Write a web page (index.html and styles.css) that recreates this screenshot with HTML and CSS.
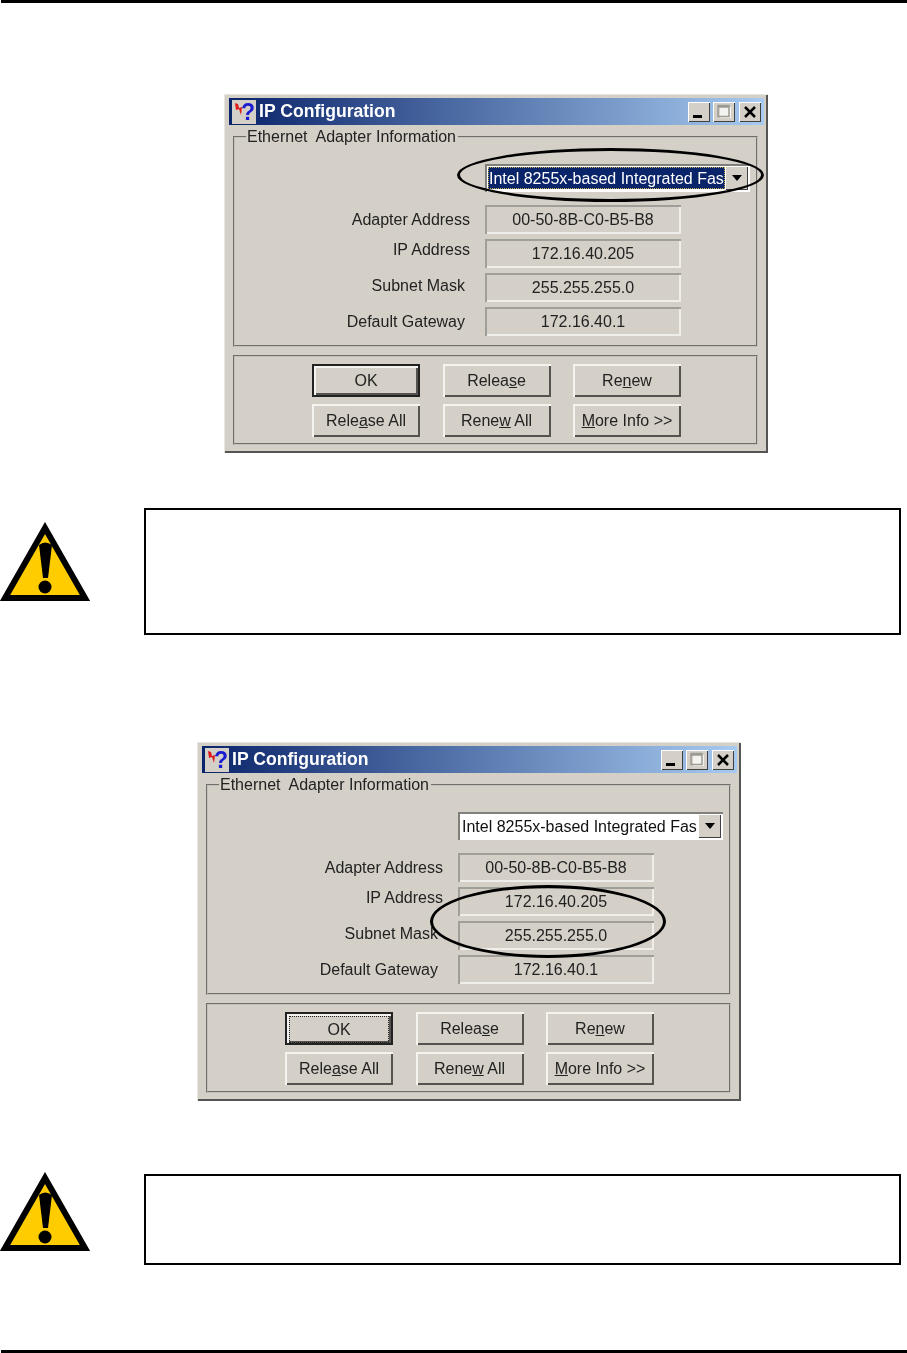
FILE: index.html
```html
<!DOCTYPE html>
<html lang="en">
<head>
  <meta charset="UTF-8">
  <title>IP Configuration</title>
  <link rel="stylesheet" href="styles.css">
</head>
<body>
  <div class="rule"></div>

  <div class="window window-first">
    <div class="titlebar">
      <div class="app-icon">
        <svg viewBox="0 0 24 24"><path d="M3 3l1 7 3-1 2 6 1-8-3 1-1-4z" fill="#e01818"/></svg>
        <span class="app-icon-mark">?</span>
      </div>
      <span class="title-text">IP Configuration</span>
      <div class="controls">
        <div class="ctl"><svg viewBox="0 0 22 20"><path d="M5 13h9v3H5z" fill="#000"/></svg></div>
        <div class="ctl"><svg viewBox="0 0 22 20"><path d="M7 5h11v11H7z" fill="#f4f3ef"/><path d="M5 3.500h11v11H5zM5 5h11" fill="none" stroke="#9c9a94" stroke-width="1.500"/></svg></div>
        <div class="ctl ctl-close"><svg viewBox="0 0 22 20"><path d="M6 5l10 10M16 5L6 15" fill="none" stroke="#000" stroke-width="2.500"/></svg></div>
      </div>
    </div>
    <fieldset class="group">
      <legend>Ethernet&nbsp; Adapter Information</legend>
      <div class="combo">
        <div class="combo-value combo-selected">Intel 8255x-based Integrated Fas</div>
        <div class="combo-arrow"><svg viewBox="0 0 12 7"><path d="M1 0h10L6 6z" fill="#000"/></svg></div>
      </div>
      <div class="fields">
        <div class="lbl">Adapter Address</div><div class="field">00-50-8B-C0-B5-B8</div>
        <div class="lbl lbl-ip">IP Address</div><div class="field">172.16.40.205</div>
        <div class="lbl lbl-mask">Subnet Mask</div><div class="field">255.255.255.0</div>
        <div class="lbl lbl-gw">Default Gateway</div><div class="field">172.16.40.1</div>
      </div>
    </fieldset>
    <div class="panel">
      <div class="buttons">
        <button class="btn btn-default">OK</button>
        <button class="btn">Relea<u>s</u>e</button>
        <button class="btn">Re<u>n</u>ew</button>
        <button class="btn">Rele<u>a</u>se All</button>
        <button class="btn">Rene<u>w</u> All</button>
        <button class="btn"><u>M</u>ore Info &gt;&gt;</button>
      </div>
    </div>
    <div class="ring ring-combo"></div>
  </div>

  <div class="note note-first">
    <svg class="warn" viewBox="0 0 90 80">
      <path d="M45 6L5 76h80z" fill="#ffcc00" stroke="#000" stroke-width="6"/>
      <path d="M39 23q6-5 13 0l-4 33h-5z" fill="#000"/>
      <circle cx="45" cy="65" r="6.500" fill="#000"/>
    </svg>
    <div class="note-box note-box-tall"></div>
  </div>

  <div class="window window-second">
    <div class="titlebar">
      <div class="app-icon">
        <svg viewBox="0 0 24 24"><path d="M3 3l1 7 3-1 2 6 1-8-3 1-1-4z" fill="#e01818"/></svg>
        <span class="app-icon-mark">?</span>
      </div>
      <span class="title-text">IP Configuration</span>
      <div class="controls">
        <div class="ctl"><svg viewBox="0 0 22 20"><path d="M5 13h9v3H5z" fill="#000"/></svg></div>
        <div class="ctl"><svg viewBox="0 0 22 20"><path d="M7 5h11v11H7z" fill="#f4f3ef"/><path d="M5 3.500h11v11H5zM5 5h11" fill="none" stroke="#9c9a94" stroke-width="1.500"/></svg></div>
        <div class="ctl ctl-close"><svg viewBox="0 0 22 20"><path d="M6 5l10 10M16 5L6 15" fill="none" stroke="#000" stroke-width="2.500"/></svg></div>
      </div>
    </div>
    <fieldset class="group">
      <legend>Ethernet&nbsp; Adapter Information</legend>
      <div class="combo">
        <div class="combo-value">Intel 8255x-based Integrated Fas</div>
        <div class="combo-arrow"><svg viewBox="0 0 12 7"><path d="M1 0h10L6 6z" fill="#000"/></svg></div>
      </div>
      <div class="fields">
        <div class="lbl">Adapter Address</div><div class="field">00-50-8B-C0-B5-B8</div>
        <div class="lbl lbl-ip">IP Address</div><div class="field">172.16.40.205</div>
        <div class="lbl lbl-mask">Subnet Mask</div><div class="field">255.255.255.0</div>
        <div class="lbl lbl-gw">Default Gateway</div><div class="field">172.16.40.1</div>
      </div>
    </fieldset>
    <div class="panel">
      <div class="buttons">
        <button class="btn btn-default"><span class="focus-box">OK</span></button>
        <button class="btn">Relea<u>s</u>e</button>
        <button class="btn">Re<u>n</u>ew</button>
        <button class="btn">Rele<u>a</u>se All</button>
        <button class="btn">Rene<u>w</u> All</button>
        <button class="btn"><u>M</u>ore Info &gt;&gt;</button>
      </div>
    </div>
    <div class="ring ring-fields"></div>
  </div>

  <div class="note note-second">
    <svg class="warn" viewBox="0 0 90 80">
      <path d="M45 6L5 76h80z" fill="#ffcc00" stroke="#000" stroke-width="6"/>
      <path d="M39 23q6-5 13 0l-4 33h-5z" fill="#000"/>
      <circle cx="45" cy="65" r="6.500" fill="#000"/>
    </svg>
    <div class="note-box note-box-short"></div>
  </div>

  <div class="rule rule-bottom"></div>
</body>
</html>
```

FILE: styles.css
```css
body {
  margin: 0;
  width: 907px;
  height: 1353px;
  display: flex;
  flex-direction: column;
  background-color: #fff;
  font-family: "Liberation Sans", Arial, sans-serif;
  overflow: hidden;
}

.rule {
  height: 3px;
  margin-left: 1px;
  background-color: #000;
  flex: none;
}

.rule-bottom {
  margin-top: auto;
}

/* dialog */
.window {
  position: relative;
  box-sizing: border-box;
  width: 544px;
  height: 359px;
  flex: none;
  padding: 3px 4px;
  background-color: #d4d0c8;
  border-top: 1px solid #e8e6e1;
  border-left: 1px solid #e8e6e1;
  box-shadow: inset -2px -2px 0 #555;
  font-size: 16px;
  color: #222;
  filter: blur(0.35px);
}

.window-first {
  margin: 91px 0 0 224px;
}

.window-second {
  margin: 107px 0 0 197px;
}

.titlebar {
  display: flex;
  align-items: center;
  height: 27px;
  padding: 0 3px;
  background: linear-gradient(to right, #0a246a, #a6caf0);
}

.app-icon {
  position: relative;
  width: 24px;
  height: 24px;
  flex: none;
  background-color: #d4d0c8;
}

.app-icon svg {
  display: block;
  width: 24px;
  height: 24px;
}

.app-icon-mark {
  position: absolute;
  top: 1px;
  right: 1px;
  font-size: 23px;
  line-height: 23px;
  font-weight: bold;
  color: #1a1ad0;
}

.title-text {
  margin-left: 3px;
  color: #fff;
  font-size: 17.6px;
  font-weight: bold;
}

.controls {
  display: flex;
  margin-left: auto;
  gap: 3px;
}

.ctl {
  width: 22px;
  height: 20px;
  background-color: #d4d0c8;
  box-shadow: inset 1px 1px 0 #fff, inset -1px -1px 0 #404040;
}

.ctl svg {
  display: block;
  width: 22px;
  height: 20px;
}

.ctl-close {
  margin-left: 1px;
}

.group {
  box-sizing: border-box;
  width: 525px;
  height: 220px;
  min-width: 0;
  margin: 2px 0 0 4px;
  padding: 0 0 0 2px;
  border: 2px groove #c4c1ba;
}

.group legend {
  margin-left: 9px;
  padding: 0 2px 0 1px;
  line-height: 20px;
}

.combo {
  display: flex;
  box-sizing: border-box;
  width: 265px;
  height: 28px;
  margin: 17px 0 0 248px;
  padding: 2px;
  background-color: #fff;
  box-shadow: inset 2px 2px 0 #80807a;
}

.combo-value {
  box-sizing: border-box;
  width: 237px;
  margin: 1px 0 1px 1px;
  padding-left: 1px;
  white-space: nowrap;
  line-height: 23px;
  color: #111;
}

.combo-selected {
  background-color: #0a246a;
  color: #fff;
  outline: 1px dotted #c8b050;
  outline-offset: -1px;
}

.combo-arrow {
  display: flex;
  align-items: center;
  justify-content: center;
  width: 23px;
  background-color: #d4d0c8;
  box-shadow: inset 1px 1px 0 #fff, inset -1px -1px 0 #404040;
}

.combo-arrow svg {
  width: 12px;
  height: 7px;
}

.fields {
  display: grid;
  grid-template-columns: 233px 196px;
  grid-auto-rows: 29px;
  column-gap: 15px;
  row-gap: 5px;
  margin-top: 13px;
}

.lbl {
  display: flex;
  align-items: center;
  justify-content: flex-end;
}

.lbl-ip {
  padding-bottom: 8px;
}

.lbl-mask {
  padding: 0 5px 4px 0;
}

.lbl-gw {
  padding-right: 5px;
}

.field {
  display: flex;
  align-items: center;
  justify-content: center;
  box-shadow: inset 2px 2px 0 #a09e98, inset -2px -2px 0 #f0eeea;
}

.panel {
  box-sizing: border-box;
  width: 525px;
  height: 90px;
  margin: 8px 0 0 4px;
  padding: 7px 0 0 77px;
  border: 2px groove #c4c1ba;
}

.buttons {
  display: grid;
  grid-template-columns: repeat(3, 108px);
  grid-auto-rows: 33px;
  column-gap: 22.5px;
  row-gap: 7px;
}

.btn {
  padding: 0;
  border: none;
  background-color: #d4d0c8;
  box-shadow: inset 2px 2px 0 #f4f3ef, inset -2px -2px 0 #55534f;
  font: inherit;
  color: inherit;
}

.btn-default {
  border: 2px solid #222;
}

.focus-box {
  display: flex;
  align-items: center;
  justify-content: center;
  height: 25px;
  margin: 2px;
  border: 1px dotted #222;
}

/* hand drawn rings over the screenshots */
.ring {
  position: absolute;
  box-sizing: border-box;
  border: 3px solid #000;
  border-radius: 50%;
}

.ring-combo {
  left: 232px;
  top: 53px;
  width: 307px;
  height: 54px;
}

.ring-fields {
  left: 232px;
  top: 142px;
  width: 236px;
  height: 73px;
}

/* warning notes */
.note {
  display: flex;
  flex: none;
  align-items: flex-start;
}

.note-first {
  margin-top: 55px;
}

.note-second {
  margin-top: 71px;
}

.warn {
  width: 90px;
  height: 80px;
  flex: none;
}

.note-first .warn {
  margin-top: 14px;
}

.note-box {
  box-sizing: border-box;
  width: 757px;
  margin-left: 54px;
  border: 2px solid #000;
}

.note-box-tall {
  height: 127px;
}

.note-box-short {
  height: 91px;
  margin-top: 2px;
}
```
